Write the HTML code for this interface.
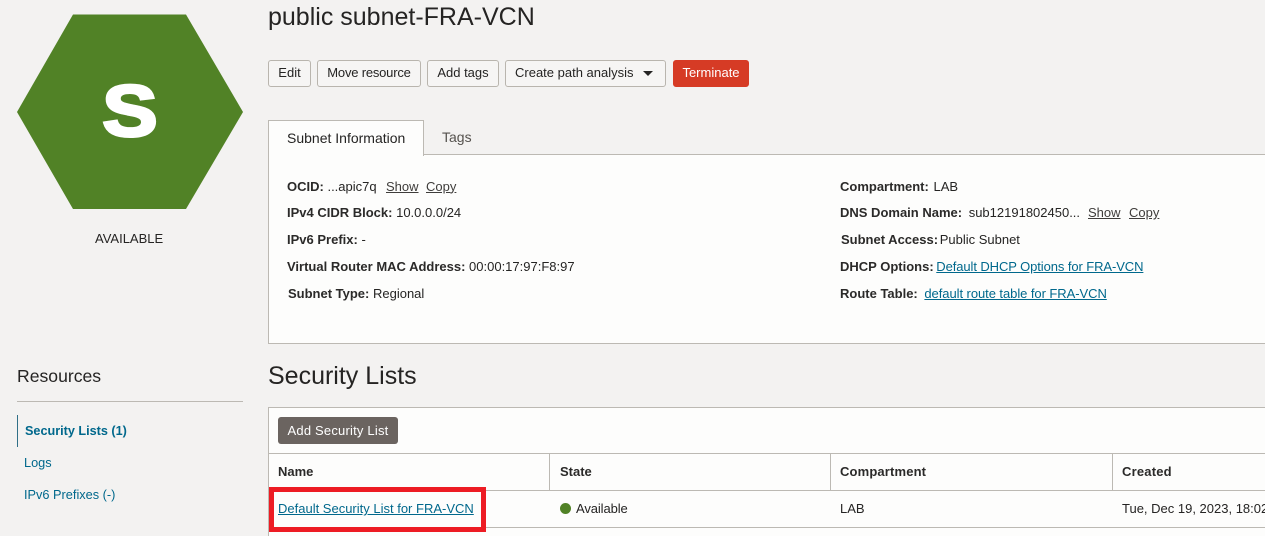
<!DOCTYPE html>
<html style="width:1265px;height:536px;overflow:hidden"><head><meta charset="utf-8"><style>
html,body{margin:0;padding:0}
body{width:1265px;height:536px;background:#f3f2f1;overflow:hidden;position:relative;font-family:"Liberation Sans",sans-serif;font-size:13px;color:#252423}
.t{position:absolute;white-space:nowrap;line-height:16px}
.b{position:absolute;box-sizing:border-box;height:27px;top:60px;border:1px solid #b9b5ae;border-radius:3px;background:#f6f5f4;text-align:center;line-height:23px;font-size:13px;color:#252423;white-space:nowrap}
.box{position:absolute;box-sizing:border-box;background:#fdfdfc}
.l{position:absolute;background:#bcb9b3}
b{font-weight:bold;color:#2b2a29}
a{color:#00688c;text-decoration:underline}
u{color:#3f3d3b}
</style></head><body>
<svg style="position:absolute;left:0;top:0" width="260" height="220"><polygon points="73,14.500 186,14.500 243,112 186,209 73,209 17,112" fill="#518226"/><text transform="translate(130,136) scale(1.15,1)" text-anchor="middle" font-family="Liberation Sans" font-weight="bold" font-size="72" fill="#fff" stroke="#fff" stroke-width="3">S</text></svg>
<div class="t" style="left:95px;top:231px;font-size:13px">AVAILABLE</div>

<div class="t" style="left:17px;top:366px;font-size:17.600px;line-height:21px">Resources</div>
<div class="l" style="left:17px;top:401px;width:226px;height:1px"></div>
<div style="position:absolute;left:17px;top:415px;width:1px;height:32px;background:#2f6f87"></div>
<div class="t" style="left:25px;top:423px;color:#00688c;font-weight:bold;font-size:12.650px">Security Lists (1)</div>
<div class="t" style="left:24px;top:455px;color:#00688c;font-size:12.750px">Logs</div>
<div class="t" style="left:24px;top:487px;color:#00688c;font-size:12.750px">IPv6 Prefixes (-)</div>

<div class="t" style="left:268px;top:2px;font-size:25px;line-height:30px">public subnet-FRA-VCN</div>
<div class="b" style="left:268px;width:43px">Edit</div>
<div class="b" style="left:317px;width:104px;letter-spacing:-.2px">Move resource</div>
<div class="b" style="left:427px;width:72px">Add tags</div>
<div class="b" style="left:505px;width:161px;text-align:left;padding-left:9px">Create path analysis<svg style="position:absolute;left:137px;top:10px" width="11" height="6"><polygon points="0,0 10,0 5,5" fill="#252423"/></svg></div>
<div class="b" style="left:673px;width:76px;background:#d63b25;border-color:#d63b25;color:#fff">Terminate</div>

<div class="box" style="left:268px;top:154px;width:1000px;height:190px;border:1px solid #bcb9b3"></div>
<div class="box" style="left:268px;top:120px;width:156px;height:36px;border:1px solid #bcb9b3;border-bottom:0"></div>
<div class="t" style="left:287px;top:130px;font-size:14px">Subnet Information</div>
<div class="t" style="left:442px;top:129px;font-size:14px;color:#55524e">Tags</div>

<div class="t" style="left:287px;top:178.500px"><b>OCID:</b> ...apic7q</div>
<div class="t" style="left:386px;top:178.500px"><u>Show</u></div>
<div class="t" style="left:426px;top:178.500px"><u>Copy</u></div>
<div class="t" style="left:287px;top:205px"><b>IPv4 CIDR Block:</b> 10.0.0.0/24</div>
<div class="t" style="left:287px;top:232px"><b>IPv6 Prefix:</b> -</div>
<div class="t" style="left:287px;top:259px"><b>Virtual Router MAC Address:</b> 00:00:17:97:F8:97</div>
<div class="t" style="left:288px;top:286px"><b>Subnet Type:</b> Regional</div>

<div class="t" style="left:840px;top:178.500px"><b>Compartment:</b> <span style="margin-left:1px">LAB</span></div>
<div class="t" style="left:840px;top:205px"><b>DNS Domain Name:</b> <span style="margin-left:3px">sub12191802450...</span></div>
<div class="t" style="left:1088px;top:205px"><u>Show</u></div>
<div class="t" style="left:1129px;top:205px"><u>Copy</u></div>
<div class="t" style="left:841px;top:232px"><b>Subnet Access:</b> <span style="margin-left:-2px">Public Subnet</span></div>
<div class="t" style="left:840px;top:259px"><b>DHCP Options:</b> <a style="margin-left:-1px;letter-spacing:-.09px">Default DHCP Options for FRA-VCN</a></div>
<div class="t" style="left:840px;top:286px"><b>Route Table:</b> <a style="margin-left:3px;letter-spacing:-.06px">default route table for FRA-VCN</a></div>

<div class="t" style="left:268px;top:361px;font-size:25px;line-height:30px">Security Lists</div>
<div class="box" style="left:268px;top:407px;width:1000px;height:129px;border:1px solid #bcb9b3;border-bottom:0"></div>
<div style="position:absolute;left:278px;top:417px;width:120px;height:27px;background:#6b6460;border-radius:3px;color:#fff;text-align:center;line-height:27px;font-size:13px;letter-spacing:.2px">Add Security List</div>
<div class="l" style="left:269px;top:453px;width:996px;height:1px"></div>
<div class="l" style="left:269px;top:490px;width:996px;height:1px"></div>
<div class="l" style="left:269px;top:527px;width:996px;height:1px"></div>
<div class="l" style="left:549px;top:453px;width:1px;height:37px"></div>
<div class="l" style="left:830px;top:453px;width:1px;height:37px"></div>
<div class="l" style="left:1112px;top:453px;width:1px;height:37px"></div>
<div class="t" style="left:278px;top:464px"><b>Name</b></div>
<div class="t" style="left:560px;top:464px"><b>State</b></div>
<div class="t" style="left:840px;top:464px;letter-spacing:.15px"><b>Compartment</b></div>
<div class="t" style="left:1122px;top:464px;letter-spacing:.2px"><b>Created</b></div>
<div class="t" style="left:278px;top:501px"><a>Default Security List for FRA-VCN</a></div>
<div style="position:absolute;left:560px;top:503px;width:11px;height:11px;border-radius:50%;background:#518226"></div>
<div class="t" style="left:576px;top:501px;letter-spacing:-.1px">Available</div>
<div class="t" style="left:840px;top:501px">LAB</div>
<div class="t" style="left:1122px;top:501px">Tue, Dec 19, 2023, 18:02:14 UTC</div>
<div style="position:absolute;box-sizing:border-box;left:269px;top:487px;width:217px;height:45px;border:5px solid #ed1c24"></div>
</body></html>
